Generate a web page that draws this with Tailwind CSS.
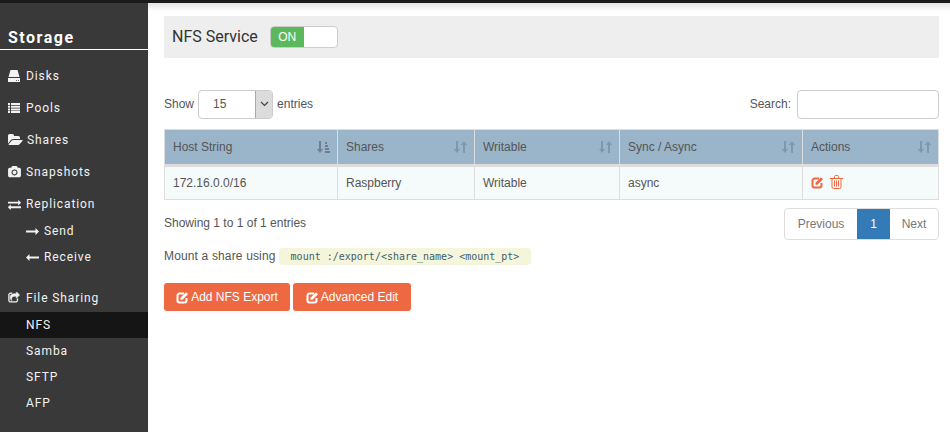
<!DOCTYPE html>
<html lang="en">
<head>
  <meta charset="UTF-8" />
  <title>NFS | Storage</title>
  <script src="https://cdn.jsdelivr.net/npm/@tailwindcss/browser@4"></script>
</head>
<body class="bg-white font-['Liberation_Sans',sans-serif] text-[12px] text-[#555] overflow-hidden">
  <div class="h-[3px] bg-[#1a1a1a]"></div>
  <div class="flex h-[429px]">
    <!-- sidebar -->
    <aside class="w-[148px] shrink-0 bg-[#393939] text-[#f2f2f2] font-['Roboto',sans-serif] text-[12px] tracking-[0.9px]">
      <h2 class="h-[47px] pt-[25px] pl-[8px] border-b border-white text-[16px] leading-[20px] font-bold tracking-[1.5px] text-white">Storage</h2>
      <nav class="pt-[10px]">
        <a class="h-[32px] flex items-center pl-[8px] gap-[6px]">
          <svg class="w-[12px] h-[12px]" viewBox="0 0 12 12" fill="currentColor"><path d="M2.500 0h7l2 7H.5z"/><path d="M0 8h12v4H0zM8 10v.8h1V10zM10 10v.8h1V10z" fill-rule="evenodd"/></svg>
          <span>Disks</span>
        </a>
        <a class="h-[32px] flex items-center pl-[8px] gap-[6px]">
          <svg class="w-[12px] h-[12px]" viewBox="0 0 12 12" fill="currentColor"><path d="M0 1h2v2H0zM3 1h9v2H3zM0 3.700h2v2H0zM3 3.700h9v2H3zM0 6.400h2v2H0zM3 6.400h9v2H3zM0 9.100h2v2H0zM3 9.100h9v2H3z"/></svg>
          <span>Pools</span>
        </a>
        <a class="h-[32px] flex items-center pl-[8px] gap-[4px]">
          <svg class="w-[15px] h-[14px]" viewBox="0 0 1920 1792" fill="currentColor"><path d="M1879 952q0 31-31 66l-336 396q-43 51-120.500 86.500t-143.500 35.500h-1088q-34 0-60.500-13t-26.500-43q0-31 31-66l336-396q43-51 120.500-86.500t143.500-35.500h1088q34 0 60.500 13t26.500 43zm-343-344v160h-832q-94 0-197 47.500t-164 119.500l-337 396-5 6q0-4-.5-12.500t-.5-12.500v-960q0-92 66-158t158-66h320q92 0 158 66t66 158v32h544q92 0 158 66t66 158z"/></svg>
          <span>Shares</span>
        </a>
        <a class="h-[32px] flex items-center pl-[8px] gap-[5px]">
          <svg class="w-[13px] h-[12px]" viewBox="0 0 1920 1792" fill="currentColor"><path d="M960 672q119 0 203.500 84.500t84.500 203.500-84.500 203.500-203.500 84.500-203.500-84.500-84.500-203.500 84.500-203.500 203.500-84.500zm704-416q106 0 181 75t75 181v896q0 106-75 181t-181 75h-1408q-106 0-181-75t-75-181v-896q0-106 75-181t181-75h224l51-136q19-49 69.500-84.500t103.500-35.500h512q53 0 103.500 35.500t69.500 84.500l51 136h224zm-704 1152q185 0 316.500-131.500t131.500-316.500-131.500-316.500-316.500-131.500-316.500 131.500-131.500 316.500 131.500 316.500 316.500 131.500z"/></svg>
          <span>Snapshots</span>
        </a>
        <a class="h-[32px] flex items-center pl-[8px] gap-[5px]">
          <svg class="w-[13px] h-[13px]" viewBox="0 0 1792 1792" fill="currentColor"><path d="M1792 1184v192q0 13-9.500 22.500t-22.500 9.500h-1376v192q0 13-9.500 22.500t-22.500 9.500q-12 0-24-10l-319-320q-9-9-9-22 0-14 9-23l320-320q9-9 23-9 13 0 22.500 9.500t9.500 22.500v192h1376q13 0 22.500 9.500t9.500 22.500zm0-544q0 14-9 23l-320 320q-9 9-23 9-13 0-22.500-9.500t-9.500-22.500v-192h-1376q-13 0-22.500-9.500t-9.500-22.500v-192q0-13 9.500-22.500t22.500-9.500h1376v-192q0-14 9-23t23-9q12 0 24 10l319 319q9 9 9 23z"/></svg>
          <span>Replication</span>
        </a>
        <a class="h-[26px] flex items-center pl-[26px] gap-[5px] -mt-[2px]">
          <svg class="w-[13px] h-[7px]" viewBox="0 0 13 7" fill="currentColor"><path d="M0 2.500h9.500V0L13 3.500 9.500 7V4.500H0z"/></svg>
          <span>Send</span>
        </a>
        <a class="h-[26px] flex items-center pl-[26px] gap-[5px]">
          <svg class="w-[13px] h-[7px]" viewBox="0 0 13 7" fill="currentColor"><path d="M13 2.500H3.500V0L0 3.500 3.500 7V4.500H13z"/></svg>
          <span>Receive</span>
        </a>
        <a class="h-[32px] flex items-center pl-[8px] gap-[6px] mt-[12px]">
          <svg class="w-[12px] h-[12px]" viewBox="0 0 1792 1792" fill="currentColor" stroke="currentColor" stroke-width="70"><path d="M1472 989v259q0 119-84.500 203.500t-203.500 84.500h-832q-119 0-203.500-84.500t-84.500-203.500v-832q0-119 84.500-203.500t203.500-84.500h255q13 0 22.500 9.500t9.500 22.500q0 27-26 32-77 26-133 60-10 4-16 4h-112q-66 0-113 47t-47 113v832q0 66 47 113t113 47h832q66 0 113-47t47-113v-214q0-19 18-29 28-13 54-37 16-16 35-8 21 9 21 29zm237-496l-384 384q-18 19-45 19-12 0-25-5-39-17-39-59v-192h-160q-323 0-438 131-119 137-74 473 3 23-20 34-8 2-12 2-16 0-26-13-10-14-21-31t-39.500-68.500-49.500-99.500-38.500-114-17.500-122q0-49 3.500-91t14-90 28-88 47-81.500 68.500-74 94.500-61.500 124.500-48.500 159.500-30.500 196.500-11h160v-192q0-42 39-59 13-5 25-5 26 0 45 19l384 384q19 19 19 45t-19 45z"/></svg>
          <span>File Sharing</span>
        </a>
        <a class="h-[26px] flex items-center pl-[26px] -mt-[2px] bg-[#151515]">NFS</a>
        <a class="h-[26px] flex items-center pl-[26px]">Samba</a>
        <a class="h-[26px] flex items-center pl-[26px]">SFTP</a>
        <a class="h-[26px] flex items-center pl-[26px]">AFP</a>
      </nav>
    </aside>

    <!-- main -->
    <main class="flex-1 min-w-0 bg-gradient-to-b from-[#e4e4e4] via-white via-[2%] to-white pl-[16px] pr-[11px] pt-[13px]">
      <div class="h-[42px] bg-[#eeeeee] flex items-center pl-[8px] gap-[12px]">
        <h3 class="text-[16px] text-[#333] font-normal font-['Roboto',sans-serif]">NFS Service</h3>
        <div class="w-[68px] h-[22px] flex rounded-[4px] border border-[#ccc] bg-white overflow-hidden">
          <span class="w-[33px] bg-[#5cb85c] text-white flex items-center justify-center">ON</span>
        </div>
      </div>

      <div class="flex justify-between items-center mt-[31px] h-[30px]">
        <label class="flex items-center gap-[3px]">
          Show
          <span class="w-[75px] h-[29px] flex rounded-[4px] border border-[#ccc] overflow-hidden bg-white mx-[1px]">
            <span class="flex-1 pl-[14px] flex items-center text-[#555]">15</span>
            <span class="w-[17px] bg-[#dcdcdc] border-l border-[#aaa] flex items-center justify-center">
              <svg class="w-[9px] h-[6px]" viewBox="0 0 9 6" fill="none" stroke="#444" stroke-width="1.200"><path d="M1 1l3.500 3.500L8 1"/></svg>
            </span>
          </span>
          entries
        </label>
        <label class="flex items-center gap-[6px]">
          Search:
          <span class="w-[142px] h-[29px] rounded-[4px] border border-[#ccc] bg-white"></span>
        </label>
      </div>

      <table class="w-[775px] mt-[10px] table-fixed border-collapse border border-[#ddd]">
        <thead>
          <tr class="h-[36px] bg-[#9ab4c9] text-[#555]">
            <th class="w-[173px] border border-[#ddd] border-b-[3px] font-normal text-left pl-[8px]"><div class="flex items-center justify-between pr-[7px]">Host String
              <svg class="w-[13px] h-[12px] text-[#6f7f8d]" viewBox="0 0 13 12" fill="currentColor"><path d="M2 0h2v8h2L3 12 0 8h2zM8 1h2v2H8zM8 4h3v2H8zM8 7h4v2H8zM8 10h5v2H8z"/></svg></div></th>
            <th class="w-[137px] border border-[#ddd] border-b-[3px] font-normal text-left pl-[8px]"><div class="flex items-center justify-between pr-[7px]">Shares
              <svg class="w-[13px] h-[12px] text-[#7f97ab]" viewBox="0 0 13 12" fill="currentColor"><path d="M2 0h2v8h2L3 12 0 8h2zM9 12h2V4h2L10 0 7 4h2z"/></svg></div></th>
            <th class="w-[145px] border border-[#ddd] border-b-[3px] font-normal text-left pl-[8px]"><div class="flex items-center justify-between pr-[7px]">Writable
              <svg class="w-[13px] h-[12px] text-[#7f97ab]" viewBox="0 0 13 12" fill="currentColor"><path d="M2 0h2v8h2L3 12 0 8h2zM9 12h2V4h2L10 0 7 4h2z"/></svg></div></th>
            <th class="w-[183px] border border-[#ddd] border-b-[3px] font-normal text-left pl-[8px]"><div class="flex items-center justify-between pr-[7px]">Sync / Async
              <svg class="w-[13px] h-[12px] text-[#7f97ab]" viewBox="0 0 13 12" fill="currentColor"><path d="M2 0h2v8h2L3 12 0 8h2zM9 12h2V4h2L10 0 7 4h2z"/></svg></div></th>
            <th class="border border-[#ddd] border-b-[3px] font-normal text-left pl-[8px]"><div class="flex items-center justify-between pr-[7px]">Actions
              <svg class="w-[13px] h-[12px] text-[#7f97ab]" viewBox="0 0 13 12" fill="currentColor"><path d="M2 0h2v8h2L3 12 0 8h2zM9 12h2V4h2L10 0 7 4h2z"/></svg></div></th>
          </tr>
        </thead>
        <tbody>
          <tr class="h-[34px] bg-[#f5fafa]">
            <td class="border border-[#ddd] pl-[8px]">172.16.0.0/16</td>
            <td class="border border-[#ddd] pl-[8px]">Raspberry</td>
            <td class="border border-[#ddd] pl-[8px]">Writable</td>
            <td class="border border-[#ddd] pl-[8px]">async</td>
            <td class="border border-[#ddd] pl-[8px]">
              <div class="flex items-center gap-[6px] -mt-[2px]">
                <svg class="w-[13px] h-[13px] text-[#ee6941]" viewBox="0 0 13 13" fill="none" stroke="currentColor"><path stroke-width="2" d="M8 2.500H3.500a2 2 0 0 0-2 2v5a2 2 0 0 0 2 2h5a2 2 0 0 0 2-2V7"/><path fill="currentColor" stroke="none" d="M4.500 6.700 10 1.200l2 2-5.500 5.500H4.500z"/></svg>
                <svg class="w-[13px] h-[14px] text-[#ee6941]" viewBox="0 0 13 14" fill="none" stroke="currentColor"><path d="M0 3.500h13M4.500 3V1.500a1 1 0 0 1 1-1h2a1 1 0 0 1 1 1V3M2 3.500v8.500a1.500 1.500 0 0 0 1.500 1.500h6A1.500 1.500 0 0 0 11 12V3.500M4.500 5.500v6M6.500 5.500v6M8.500 5.500v6"/></svg>
              </div>
            </td>
          </tr>
        </tbody>
      </table>

      <div class="flex justify-between mt-[8px]">
        <div class="pt-[6px]">Showing 1 to 1 of 1 entries</div>
        <div class="flex h-[32px] rounded-[4px] border border-[#ddd] overflow-hidden text-[#777]">
          <span class="w-[72px] flex items-center justify-center">Previous</span>
          <span class="w-[33px] -my-px bg-[#337ab7] text-white flex items-center justify-center">1</span>
          <span class="w-[48px] flex items-center justify-center">Next</span>
        </div>
      </div>

      <div class="flex items-center gap-[3px] mt-[8px] h-[16px]">
        <span class="tracking-[0.15px]">Mount a share using</span>
        <code class="h-[17px] px-[12px] rounded-[4px] bg-[#f5f5dc] text-[#3f5d6b] font-['DejaVu_Sans_Mono',monospace] text-[10px] leading-[17px]">mount :/export/&lt;share_name&gt; &lt;mount_pt&gt;</code>
      </div>

      <div class="flex gap-[3px] mt-[19px]">
        <button class="h-[28px] w-[126px] rounded-[3px] bg-[#ee6941] text-white flex items-center justify-center gap-[2px]">
          <svg class="w-[13px] h-[13px]" viewBox="0 0 13 13" fill="none" stroke="currentColor"><path stroke-width="2" d="M8 2.500H3.500a2 2 0 0 0-2 2v5a2 2 0 0 0 2 2h5a2 2 0 0 0 2-2V7"/><path fill="currentColor" stroke="none" d="M4.500 6.700 10 1.200l2 2-5.500 5.500H4.500z"/></svg>
          Add NFS Export
        </button>
        <button class="h-[28px] w-[118px] rounded-[3px] bg-[#ee6941] text-white flex items-center justify-center gap-[2px]">
          <svg class="w-[13px] h-[13px]" viewBox="0 0 13 13" fill="none" stroke="currentColor"><path stroke-width="2" d="M8 2.500H3.500a2 2 0 0 0-2 2v5a2 2 0 0 0 2 2h5a2 2 0 0 0 2-2V7"/><path fill="currentColor" stroke="none" d="M4.500 6.700 10 1.200l2 2-5.500 5.500H4.500z"/></svg>
          Advanced Edit
        </button>
      </div>
    </main>
  </div>
</body>
</html>
